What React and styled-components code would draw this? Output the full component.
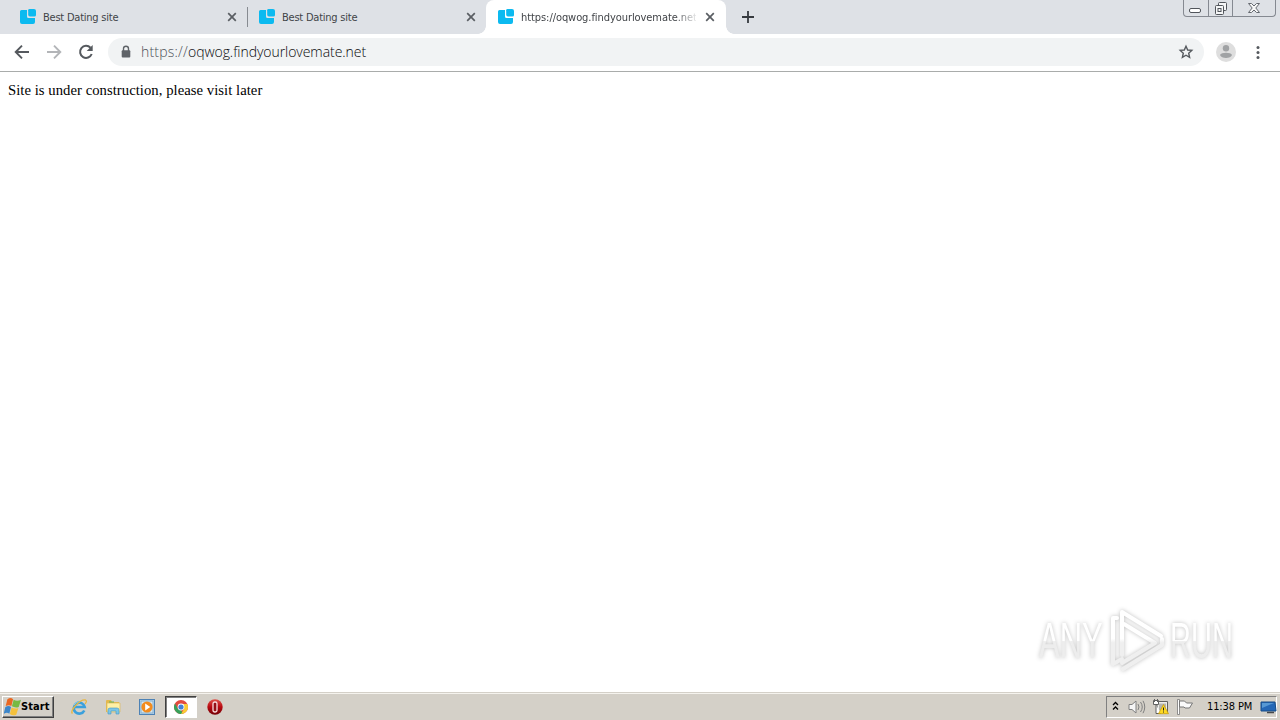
import React from 'react';
import styled, { createGlobalStyle } from 'styled-components';

const Global = createGlobalStyle`
  * { box-sizing: border-box; }
  body { margin: 0; background: #fff; overflow: hidden; }
  svg { display: block; flex: none; }
`;

const Screen = styled.div`
  width: 1280px;
  height: 720px;
  display: flex;
  flex-direction: column;
  background: #fff;
`;

const TabStrip = styled.header`
  height: 34px;
  flex: none;
  display: flex;
  padding-left: 8px;
  background: #dee1e6;
`;

const Tab = styled.div`
  position: relative;
  width: ${p => p.$width}px;
  height: 34px;
  display: flex;
  align-items: center;
  padding: 0 ${p => (p.$active ? 11 : 10)}px 0 12px;
  background: ${p => (p.$active ? '#fff' : 'transparent')};
  border-radius: 8px 8px 0 0;
  &::before, &::after {
    content: '';
    display: ${p => (p.$active ? 'block' : 'none')};
    position: absolute;
    bottom: 0;
    width: 8px;
    height: 8px;
  }
  &::before { left: -8px; background: radial-gradient(circle at 0 0, transparent 7.5px, #fff 8px); }
  &::after { right: -8px; background: radial-gradient(circle at 100% 0, transparent 7.5px, #fff 8px); }
`;

const Separator = styled.i`
  width: 1px;
  height: 20px;
  margin: 7px -1px 0 0;
  background: #878b91;
`;

const TabTitle = styled.span`
  flex: 1;
  margin-left: 7px;
  overflow: hidden;
  white-space: nowrap;
  font: 11px/16px "DejaVu Sans Condensed", "DejaVu Sans", sans-serif;
  font-stretch: condensed;
  letter-spacing: ${p => p.$spacing}px;
  color: #414448;
  padding-top: 1px;
  margin-right: 9px;
  mask-image: ${p => (p.$fade ? 'linear-gradient(90deg, #000 154px, transparent 178px)' : 'none')};
`;

const NewTab = styled.div`
  padding: 11px 0 0 16px;
`;

const WindowControls = styled.div`
  display: flex;
  width: 93px;
  height: 17px;
  margin: 0 4px 0 auto;
  border: 1px solid #858991;
  border-top: 0;
  border-radius: 0 0 4px 4px;
`;

const WindowButton = styled.div`
  width: ${p => p.$width}px;
  display: flex;
  justify-content: center;
  border-left: ${p => (p.$divided ? '1px solid #858991' : '0')};
`;

const Toolbar = styled.nav`
  height: 38px;
  flex: none;
  display: flex;
  align-items: center;
  padding: 0 12px 2px 12px;
  border-bottom: 1px solid #a9acab;
  background: #fff;
`;

const NavButtons = styled.div`
  display: flex;
  gap: 12px;
  width: 96px;
`;

const AddressBar = styled.div`
  width: 1096px;
  height: 28px;
  display: flex;
  align-items: center;
  padding: 0 10px 0 12px;
  border-radius: 14px;
  background: #f1f3f4;
`;

const Url = styled.span`
  flex: 1;
  margin-left: 9px;
  font: 14px/20px "Open Sans", "Noto Sans", sans-serif;
  letter-spacing: ${p => p.$spacing}px;
  color: #08090b;
  font-weight: 300;
`;

const Scheme = styled.span`
  color: #4d5157;
  letter-spacing: 0.2px;
`;

const ToolbarEnd = styled.div`
  display: flex;
  align-items: center;
  gap: 18px;
  margin-left: 12px;
`;

const Page = styled.main`
  flex: 1;
  position: relative;
  padding: 9px 8px;
  font: 14.7px/18px "Liberation Serif", serif;
  color: #000;
`;

const Message = styled.span`
  letter-spacing: 0.04px;
`;

const Watermark = styled.div`
  position: absolute;
  left: 1039px;
  bottom: 19px;
  display: flex;
  align-items: center;
  filter: drop-shadow(0 0 2px rgba(0, 0, 0, .25));
`;

const BrandSlot = styled.div`
  width: ${p => p.$width}px;
  height: 56px;
  padding-top: 1px;
`;

const BrandWord = styled.span`
  display: block;
  width: max-content;
  font: 50px/56px "Liberation Sans", Arial, sans-serif;
  transform: scaleX(${p => p.$scale});
  transform-origin: 0 50%;
  color: transparent;
  background: linear-gradient(#fff 50%, #ededed 51%);
  background-clip: text;
`;

const Taskbar = styled.footer`
  height: 28px;
  flex: none;
  display: flex;
  align-items: center;
  padding: 1px 3px 1px 2px;
  border-top: 1px solid #d4d0c8;
  background: #d4d0c8;
  box-shadow: inset 0 1px #f5f3ee;
`;

const StartButton = styled.button`
  width: 52px;
  height: 22px;
  display: flex;
  align-items: center;
  gap: 0;
  padding: 0 1px;
  border: 1px solid;
  border-color: #fff #404040 #404040 #fff;
  box-shadow: inset -1px -1px #808080;
  background: #d4d0c8;
  color: #000;
  font: bold 11px/16px "DejaVu Sans Condensed", "DejaVu Sans", sans-serif;
  font-stretch: condensed;
  letter-spacing: 0.1px;
`;

const QuickLaunch = styled.div`
  display: flex;
  align-items: center;
  margin-left: 8px;
`;

const TaskItem = styled.div`
  width: ${p => (p.$active ? 32 : 34)}px;
  height: 22px;
  display: grid;
  place-items: center;
  background: ${p => (p.$active ? '#fff' : 'transparent')};
  border: ${p => (p.$active ? '1px solid' : '0')};
  border-color: #404040 #fff #fff #404040;
  box-shadow: ${p => (p.$active ? 'inset 1px 1px #808080' : 'none')};
  margin: 0 ${p => (p.$active ? 1 : 0)}px;
`;

const Tray = styled.div`
  width: 171px;
  height: 22px;
  display: flex;
  align-items: center;
  margin-left: auto;
  padding-left: 5px;
  border: 1px solid;
  border-color: #808080 #fff #fff #808080;
`;

const TrayIcons = styled.div`
  display: flex;
  gap: 6px;
  margin-left: 7px;
`;

const Clock = styled.span`
  width: 53px;
  margin-left: 13px;
  padding-top: 1px;
  font: 11px/16px "DejaVu Sans Condensed", "DejaVu Sans", sans-serif;
  font-stretch: condensed;
  letter-spacing: -0.13px;
  white-space: nowrap;
  color: #000;
`;

const TrayDesktop = styled.div`
  margin-left: auto;
  margin-right: -1px;
  padding-top: 1px;
`;

const SiteIcon = () => (
  <svg width="16" height="16" viewBox="0 0 16 16" fill="#0cbaf0">
    <path d="M1.5 1H7v6.5Q7 9 8.5 9H15v4q0 2-2 2H2q-2 0-2-2V2.5Q0 1 1.5 1z" />
    <path d="M9.5 0H14q2 0 2 2v4q0 1.5-1.5 1.5H10q-1.8 0-1.8-1.8V1.3Q8.2 0 9.5 0z" />
  </svg>
);

const CloseIcon = () => (
  <svg width="10" height="10" viewBox="0 0 10 10" stroke="#5a5e63" strokeWidth="1.7">
    <path d="M1.2 1.2l7.6 7.6M8.8 1.2L1.2 8.8" />
  </svg>
);

const ArrowIcon = ({ forward }) => (
  <svg width="20" height="20" viewBox="0 0 20 20" fill="none" stroke={forward ? '#b3b5b8' : '#55595e'} strokeWidth="1.9">
    <path d={forward ? 'M3 10h13M10 3.7l6.3 6.3-6.3 6.3' : 'M17 10H4M10 3.7L3.7 10l6.3 6.3'} />
  </svg>
);

const ReloadIcon = () => (
  <svg width="20" height="20" viewBox="0 0 20 20">
    <path d="M15.7 12a6 6 0 1 1-1.2-6.2" fill="none" stroke="#55595e" strokeWidth="2" />
    <path d="M16.7 3v6h-6z" fill="#55595e" />
  </svg>
);

const LockIcon = () => (
  <svg width="12" height="14" viewBox="0 0 12 14">
    <path d="M3.5 6V3.8a2.5 2.5 0 0 1 5 0V6" fill="none" stroke="#5f6368" strokeWidth="1.4" />
    <rect x="1.7" y="5.2" width="8.6" height="7.3" rx="1" fill="#5f6368" />
  </svg>
);

const StarIcon = () => (
  <svg width="16" height="16" viewBox="0 0 16 16">
    <path d="M8 2.2l1.7 3.8 4.1.4-3.1 2.8.9 4.1L8 11.2l-3.6 2.1.9-4.1-3.1-2.8 4.1-.4z" fill="none" stroke="#55595e" strokeWidth="1.4" />
  </svg>
);

const ProfileIcon = () => (
  <svg width="20" height="20" viewBox="0 0 20 20">
    <circle cx="10" cy="10" r="10" fill="#dedede" />
    <circle cx="10" cy="6.3" r="3.2" fill="#a0a2a4" />
    <path d="M4 13c1-3 11-3 12 0-1 4-11 4-12 0z" fill="#a0a2a4" />
  </svg>
);

const MenuIcon = () => (
  <svg width="8" height="18" viewBox="0 0 8 18" fill="#55595e">
    <circle cx="4" cy="4.5" r="1.5" /><circle cx="4" cy="9.5" r="1.5" /><circle cx="4" cy="14.5" r="1.5" />
  </svg>
);

const PlayBrand = () => (
  <svg width="62" height="66" viewBox="0 0 62 66">
    <defs>
      <linearGradient id="brand" x1="0" y1="0" x2="0" y2="66" gradientUnits="userSpaceOnUse">
        <stop offset=".48" stopColor="#fff" /><stop offset=".54" stopColor="#efefef" />
      </linearGradient>
    </defs>
    <g fill="none" stroke="url(#brand)" strokeWidth="4" strokeLinejoin="round" strokeLinecap="round">
      <path d="M14 48V5l39 24" />
      <path d="M16 17l31 19L14 56" />
      <path d="M9 11H5v46l9-5" />
      <path d="M15 62l39-24v-6" />
    </g>
  </svg>
);

const WindowsIcon = () => (
  <svg width="17" height="18" viewBox="1 1 15 14" preserveAspectRatio="none">
    <path d="M4 2q3-2 5 0L7.5 7.3q-2-1.5-5 0z" fill="#e96722" />
    <path d="M9.5 2.3q3 1.5 6.5 0L14 8q-3 1-6-.5z" fill="#77b943" />
    <path d="M2.2 8q3-1.5 5 0l-1.5 5.3q-2-1.5-5 0z" fill="#3c86ca" />
    <path d="M7.7 8.3q3 1.5 6 .5l-1.9 5.2q-3 1.2-5.6-.5z" fill="#f5c13c" />
  </svg>
);

const ExplorerIcon = () => (
  <svg width="18" height="18" viewBox="0 0 18 18" fill="none">
    <path d="M14.3 12.5A5.5 5.5 0 1 1 14.7 9H5" stroke="#3ba0dc" strokeWidth="2.6" />
    <path d="M4 7Q6 3 10 4" stroke="#88d2ef" />
    <path d="M2.5 15.5C-1 13 10 1 15.5 2q2 1-.5 4" stroke="#e8b640" strokeWidth="1.3" />
  </svg>
);

const FolderIcon = () => (
  <svg width="18" height="18" viewBox="0 0 18 18">
    <path d="M2 3q0-1 1-1h4l1 2h7v10H2z" fill="#e4b94c" />
    <path d="M3 5h13v9H3z" fill="#fff0a5" stroke="#dbb95f" strokeWidth=".7" />
    <path d="M4 16v-4q0-2 2-2h7q2 0 2 2v4h-3v-3H7v3z" fill="#7cc5e6" stroke="#4299c6" strokeWidth=".6" />
    <path d="M5 4h5" stroke="#65b35b" />
  </svg>
);

const MediaIcon = () => (
  <svg width="16" height="16" viewBox="0 0 16 16">
    <rect x=".5" y=".5" width="15" height="15" fill="#b9d8ee" stroke="#4d82b5" />
    <rect x="2" y="2" width="12" height="12" fill="#d5e6ef" stroke="#85aecd" />
    <circle cx="8" cy="8" r="5.6" fill="#f28b1d" />
    <path d="M6.2 4.5L11.3 8l-5.1 3.5z" fill="#fff" />
  </svg>
);

const ChromeIcon = () => (
  <svg width="14" height="14" viewBox="0 0 14 14">
    <circle cx="7" cy="7" r="7" fill="#e24b3e" />
    <path d="M1 3.5L4 9l3 1 2 3.7A7 7 0 0 1 1 3.5z" fill="#36a15a" />
    <path d="M7 4h6.3A7 7 0 0 1 7 14l3-5z" fill="#f9cc35" />
    <circle cx="7" cy="7" r="3.4" fill="#fff" /><circle cx="7" cy="7" r="2.6" fill="#4280d7" />
  </svg>
);

const OperaIcon = () => (
  <svg width="16" height="16" viewBox="0 0 16 16">
    <defs><linearGradient id="opera" x1="0" y1="0" x2="0" y2="1"><stop stopColor="#df5148" /><stop offset=".5" stopColor="#b80a12" /><stop offset="1" stopColor="#730006" /></linearGradient></defs>
    <circle cx="8" cy="8" r="7.7" fill="url(#opera)" />
    <rect x="6" y="3" width="4" height="10" rx="1.7" fill="#951015" stroke="#f8dddd" strokeWidth="1.3" />
  </svg>
);

const TrayArrows = () => (
  <svg width="9" height="12" viewBox="0 0 9 12" fill="none" stroke="#000" strokeWidth="1.3">
    <path d="M1 4l2.5-2.5L6 4M1 8.5L3.5 6 6 8.5" />
  </svg>
);

const SoundIcon = () => (
  <svg width="18" height="18" viewBox="0 0 18 18" fill="none" stroke="#808080">
    <path d="M1 6.5h3L8 3v12l-4-3.5H1z" fill="#f5f5f5" />
    <path d="M10 6q2 3 0 6M12.5 4q3.5 5 0 10M15 2.8q3.5 6.2 0 12.4" />
  </svg>
);

const NetworkIcon = () => (
  <svg width="18" height="18" viewBox="0 0 18 18">
    <path d="M5 3.5h10.5v11H5z" fill="#eeeeeb" stroke="#606060" />
    <path d="M7 5.5h7v7H7z" fill="#b5b5b1" />
    <path d="M1.5 2.5h5v4h-5zM4 7v8.5h5" fill="#fff" stroke="#606060" />
    <path d="M2.5 1v3M5.5 1v3" stroke="#606060" />
    <path d="M11.5 6.5l5 9.2H6.5z" fill="#ffda22" stroke="#c79a00" strokeWidth=".7" />
    <path d="M11.5 9.5v3m0 1v1" stroke="#222" />
  </svg>
);

const FlagIcon = () => (
  <svg width="18" height="18" viewBox="0 0 18 18">
    <path d="M1.5 1.5h2v15h-2z" fill="#fff" stroke="#777" strokeWidth=".8" />
    <path d="M3.5 3h5l2 2h6l-3 5H9L8 9H3.5z" fill="#fafafa" stroke="#777" />
  </svg>
);

const DesktopIcon = () => (
  <svg width="17" height="15" viewBox="0 0 17 15">
    <path d="M1 2h14l1 9H1z" fill="#2467b6" stroke="#174c87" />
    <path d="M2 3h12L2 8z" fill="#5698d4" />
    <path d="M7 12.5h7" stroke="#45484c" strokeWidth="1.5" />
  </svg>
);

function BrowserTab({ title, width = 239, active = false }) {
  return (
    <Tab $width={width} $active={active}>
      <SiteIcon />
      <TabTitle $fade={active} $spacing={active ? -0.07 : -0.23}>{title}</TabTitle>
      <CloseIcon />
    </Tab>
  );
}

export default function App() {
  return (
    <>
      <Global />
      <Screen>
        <TabStrip>
          <BrowserTab title="Best Dating site" />
          <Separator />
          <BrowserTab title="Best Dating site" />
          <BrowserTab title="https://oqwog.findyourlovemate.net" width={240} active />
          <NewTab>
            <svg width="12" height="12" viewBox="0 0 12 12"><path d="M6 0v12M0 6h12" stroke="#363a3f" strokeWidth="1.8" /></svg>
          </NewTab>
          <WindowControls>
            <WindowButton $width={24}><svg width="13" height="16"><rect x=".5" y="8.5" width="11" height="4" rx="1.5" fill="#fff" stroke="#51555b" /></svg></WindowButton>
            <WindowButton $width={25} $divided><svg width="14" height="16" fill="#f5f6f7" stroke="#51555b"><rect x="4.5" y="2.5" width="8" height="8" rx="1" /><rect x="1.5" y="5.5" width="8" height="9" rx="1" /><rect x="4" y="8.5" width="3" height="3" /></svg></WindowButton>
            <WindowButton $width={43} $divided><svg width="14" height="16"><path d="M1.5 3.5h3L7 6l2.5-2.5h3L8.8 8l3.7 4.5h-3L7 10l-2.5 2.5h-3L5.2 8z" fill="#f7f7f7" stroke="#656970" /></svg></WindowButton>
          </WindowControls>
        </TabStrip>
        <Toolbar>
          <NavButtons><ArrowIcon /><ArrowIcon forward /><ReloadIcon /></NavButtons>
          <AddressBar>
            <LockIcon />
            <Url $spacing={-0.05}><Scheme>https://</Scheme>oqwog.findyourlovemate.net</Url>
            <StarIcon />
          </AddressBar>
          <ToolbarEnd><ProfileIcon /><MenuIcon /></ToolbarEnd>
        </Toolbar>
        <Page>
          <Message>Site is under construction, please visit later</Message>
          <Watermark>
            <BrandSlot $width={69}><BrandWord $scale={0.62}>ANY</BrandWord></BrandSlot>
            <PlayBrand />
            <BrandSlot $width={66}><BrandWord $scale={0.58}>RUN</BrandWord></BrandSlot>
          </Watermark>
        </Page>
        <Taskbar>
          <StartButton><WindowsIcon />Start</StartButton>
          <QuickLaunch>
            <TaskItem><ExplorerIcon /></TaskItem>
            <TaskItem><FolderIcon /></TaskItem>
            <TaskItem><MediaIcon /></TaskItem>
            <TaskItem $active><ChromeIcon /></TaskItem>
            <TaskItem><OperaIcon /></TaskItem>
          </QuickLaunch>
          <Tray>
            <TrayArrows />
            <TrayIcons><SoundIcon /><NetworkIcon /><FlagIcon /></TrayIcons>
            <Clock>11:38 PM</Clock>
            <TrayDesktop><DesktopIcon /></TrayDesktop>
          </Tray>
        </Taskbar>
      </Screen>
    </>
  );
}
